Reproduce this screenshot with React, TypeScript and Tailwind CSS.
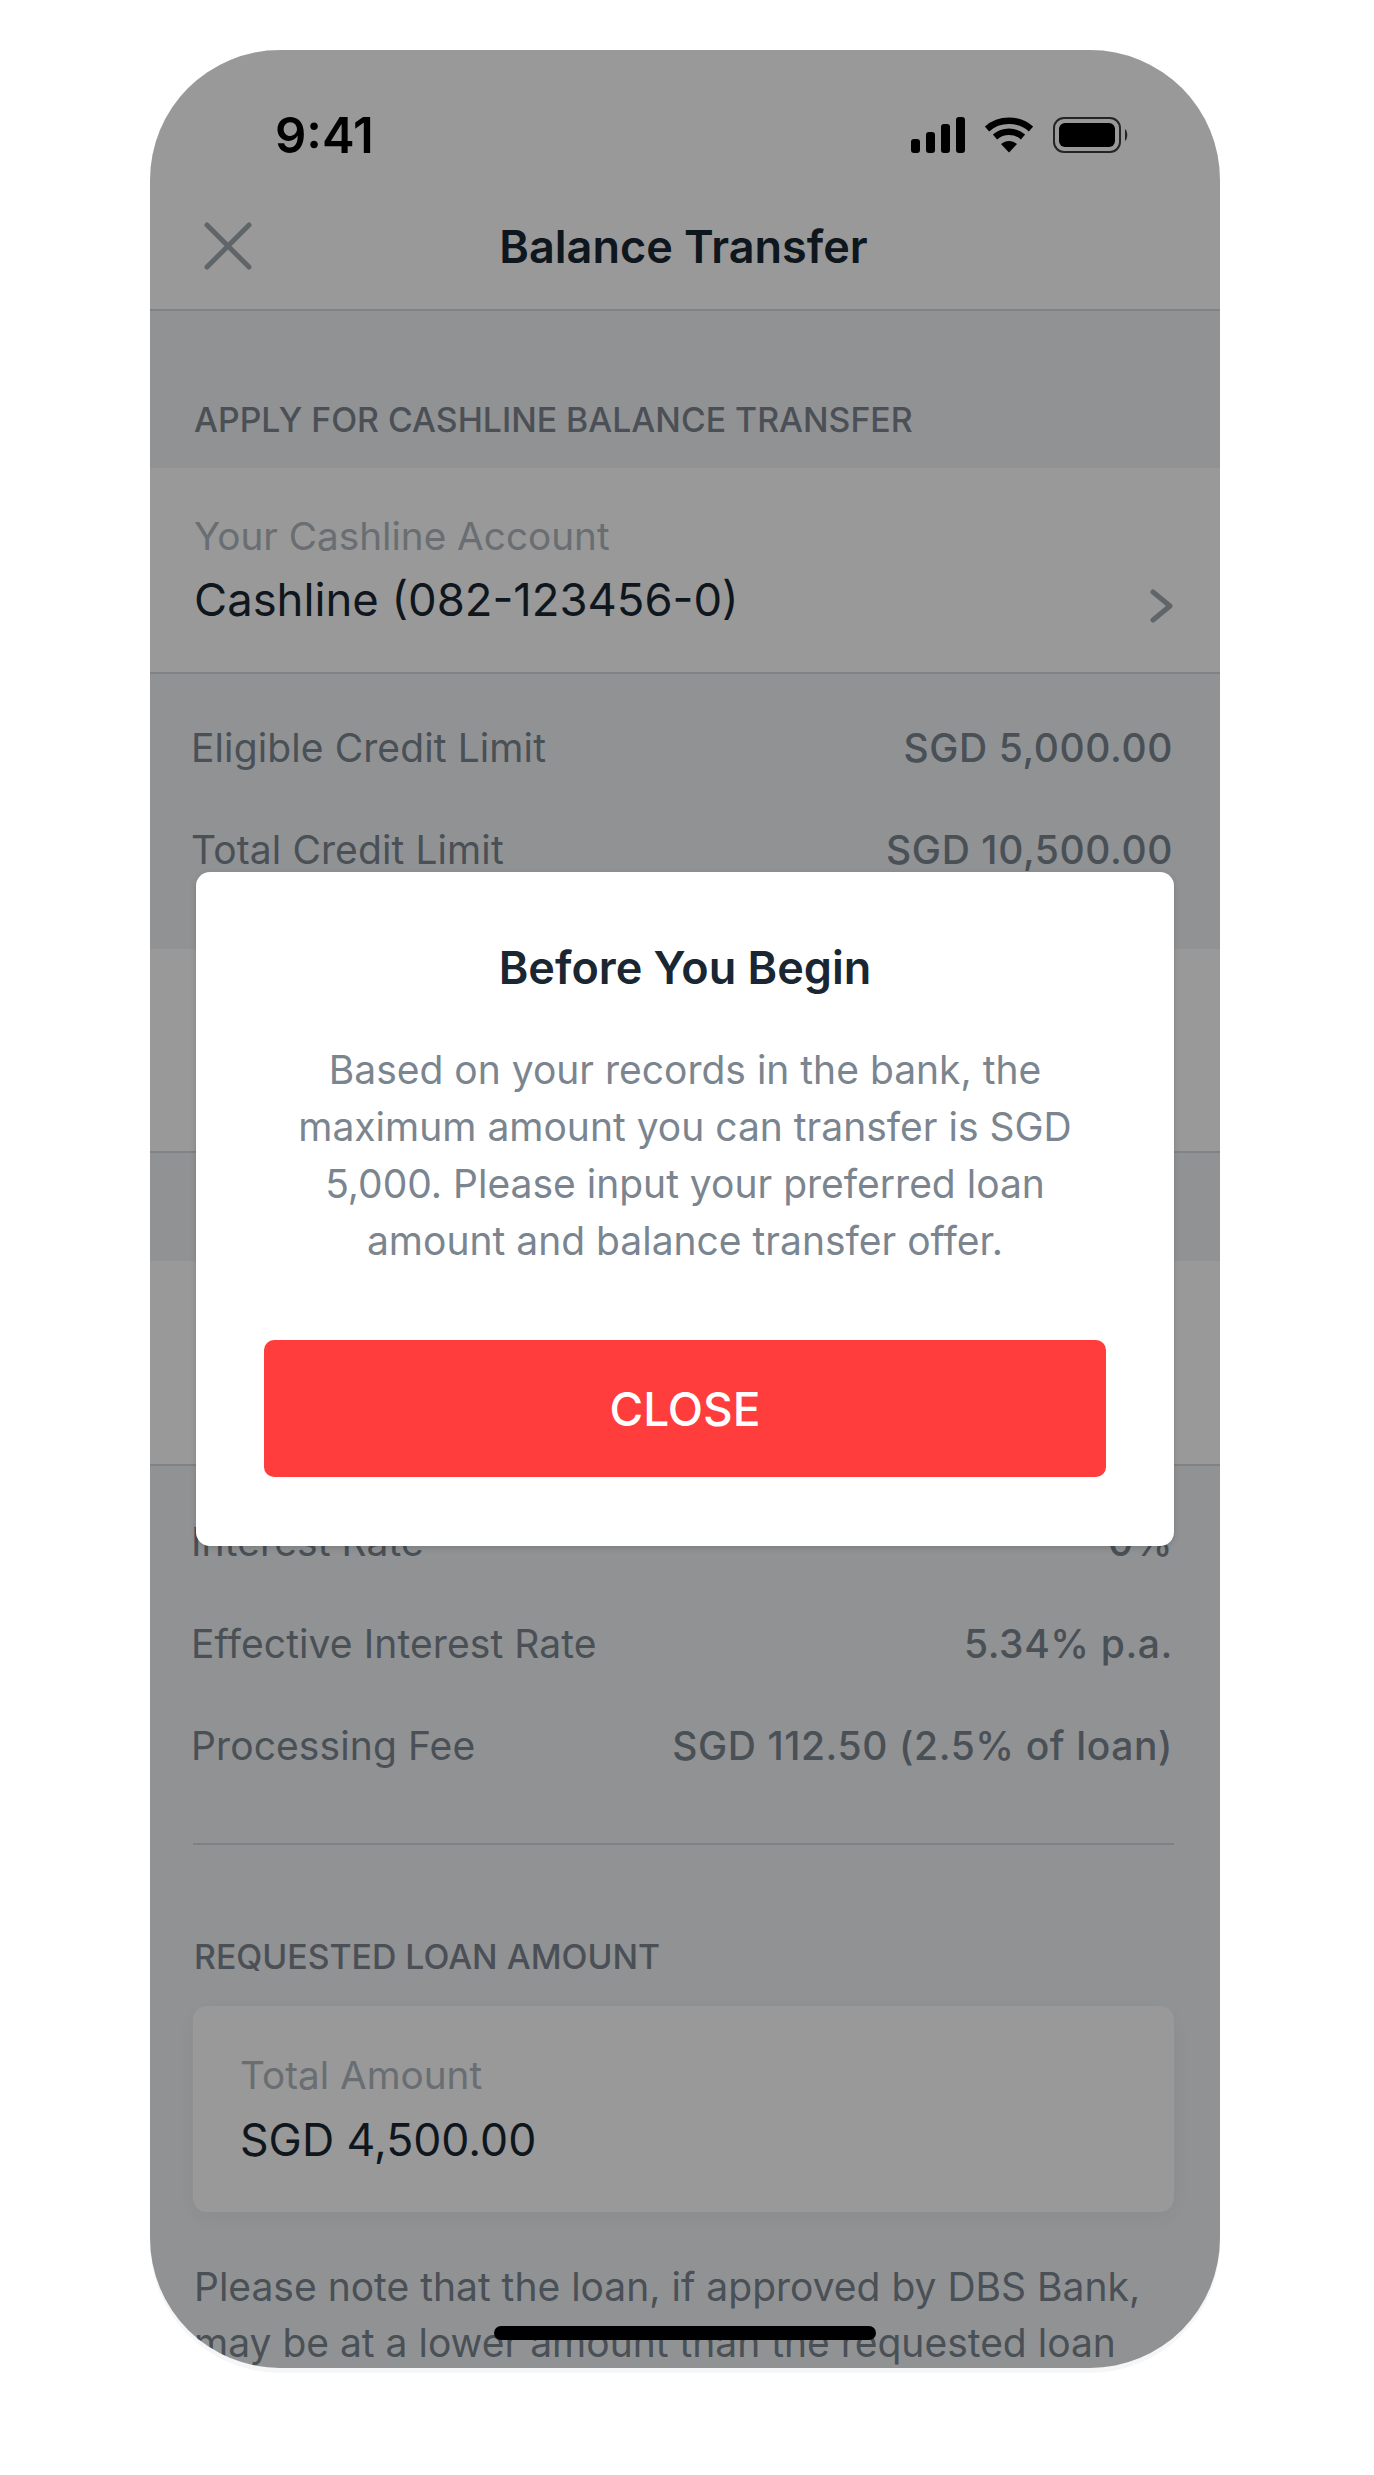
import React from "react";

const FONT = "font-['Inter','Liberation_Sans',sans-serif]";

function SummaryRow({ label, value }: { label: string; value: string }) {
  return (
    <div className="flex h-[102px] items-center justify-between pl-[41px] pr-[47px] text-[39px] text-[#7b858f]">
      <span className="tracking-[0.1px]">{label}</span>
      <span className="font-medium tracking-[0.6px]">{value}</span>
    </div>
  );
}

function SectionLabel({ children }: { children: React.ReactNode }) {
  return <div className="text-[33.8px] font-medium leading-[48px] text-[#7d858f]">{children}</div>;
}

function StatusIcons() {
  return (
    <div className="flex items-center">
      <svg width="54" height="36" viewBox="0 0 54 36" fill="#000">
        <rect x="0" y="22" width="9" height="14" rx="3" />
        <rect x="15" y="15" width="9" height="21" rx="3" />
        <rect x="30" y="7" width="9" height="29" rx="3" />
        <rect x="45" y="0" width="9" height="36" rx="3" />
      </svg>
      <svg className="ml-[20px]" width="48" height="36" viewBox="0 0 48 36" fill="none">
        <path d="M2 12 C14 1 34 1 46 12" stroke="#000" strokeWidth="6.5" />
        <path d="M10 20 C18 13 30 13 38 20" stroke="#000" strokeWidth="6.5" />
        <path d="M16 27 L24 35.5 L32 27 C27 23 21 23 16 27 Z" fill="#000" />
      </svg>
      <svg className="ml-[20px]" width="76" height="36" viewBox="0 0 76 36" fill="none">
        <rect x="1" y="1" width="66" height="34" rx="10" stroke="#3d3d3d" strokeWidth="2" />
        <rect x="6" y="6" width="56" height="24" rx="6" fill="#000" />
        <path d="M72 12 C75 14 75 22 72 24 Z" fill="#3d3d3d" />
      </svg>
    </div>
  );
}

export default function App() {
  return (
    <div className={`min-h-[2475px] bg-white pt-[50px] pl-[150px] ${FONT}`}>
      <div className="w-[1070px] rounded-[130px] bg-[#f5f6f8] pb-[5px]">
        <div className="relative h-[2318px] overflow-hidden rounded-[130px] bg-[#f2f4f7]">
          {/* status bar */}
          <div className="flex h-[134px] items-center justify-between bg-white pl-[125px] pr-[91px] pt-[36px]">
            <span className="text-[49px] font-semibold leading-none text-black">9:41</span>
            <StatusIcons />
          </div>

          {/* nav */}
          <div className="relative flex h-[127px] items-center justify-center border-b-2 border-[#d6dade] bg-white pr-[3px]">
            <svg className="absolute left-[54px] top-[38px]" width="48" height="48" viewBox="0 0 48 48" fill="none">
              <path d="M3 3 L45 45 M45 3 L3 45" stroke="#a0a9b0" strokeWidth="5" strokeLinecap="round" />
            </svg>
            <h1 className="text-[45px] font-semibold text-[#1a2733]">Balance Transfer</h1>
          </div>

          <div className="h-[157px] pl-[44px] pt-[85px]">
            <SectionLabel>APPLY FOR CASHLINE BALANCE TRANSFER</SectionLabel>
          </div>

          {/* account card */}
          <div className="flex h-[206px] items-end justify-between border-b-2 border-[#d6dade] bg-white pb-[40px] pl-[44px] pr-[46px]">
            <div>
              <div className="text-[38.7px] leading-[64px] text-[#b0b7bf]">Your Cashline Account</div>
              <div className="text-[45.4px] leading-[64px] text-[#1a2733]">Cashline (082-123456-0)</div>
            </div>
            <svg className="mb-[9px]" width="24" height="34" viewBox="0 0 24 34" fill="none">
              <path d="M3 3 L20 17 L3 31" stroke="#a0a9b0" strokeWidth="5" strokeLinecap="round" strokeLinejoin="round" />
            </svg>
          </div>

          <div className="flex flex-col pt-[23px]">
            <SummaryRow label="Eligible Credit Limit" value="SGD 5,000.00" />
            <SummaryRow label="Total Credit Limit" value="SGD 10,500.00" />
          </div>

          {/* rows hidden behind the dialog */}
          <div className="mt-[48px] h-[204px] border-b-2 border-[#d6dade] bg-white" />
          <div className="h-[108px]" />
          <div className="h-[205px] border-b-2 border-[#d6dade] bg-white" />

          <div className="flex flex-col pt-[25px]">
            <SummaryRow label="Interest Rate" value="0%" />
            <SummaryRow label="Effective Interest Rate" value="5.34% p.a." />
            <SummaryRow label="Processing Fee" value="SGD 112.50 (2.5% of loan)" />
          </div>

          <div className="ml-[43px] mr-[46px] mt-[46px] border-b-2 border-[#d3d6da]" />

          <div className="pl-[44px] pt-[88px]">
            <SectionLabel>REQUESTED LOAN AMOUNT</SectionLabel>
          </div>

          <div className="ml-[43px] mr-[46px] mt-[25px] h-[206px] rounded-[14px] bg-white pl-[47px] pt-[41px] shadow-[0_6px_24px_rgba(0,0,0,0.05)]">
            <div className="text-[38.7px] leading-[56px] text-[#b0b7bf]">Total Amount</div>
            <div className="mt-[5px] text-[44.6px] leading-[64px] text-[#1a2733]">SGD 4,500.00</div>
          </div>

          <p className="ml-[44px] mr-[60px] mt-[47px] text-[39px] leading-[56px] text-[#7b858f]">
            Please note that the loan, if approved by DBS Bank, may be at a lower amount than the requested loan
          </p>

          {/* dim layer */}
          <div className="absolute inset-0 bg-black/40" />

          {/* dialog */}
          <div className="absolute left-[46px] top-[822px] flex h-[674px] w-[978px] flex-col items-center rounded-[14px] bg-white px-[68px] pt-[64px] shadow-[0_2px_6px_rgba(0,0,0,0.15)]">
            <h2 className="text-[45px] font-semibold leading-[64px] text-[#1a2733]">Before You Begin</h2>
            <p className="mt-[41px] w-[820px] text-center text-[39px] leading-[57px] text-[#7b858f]">
              Based on your records in the bank, the maximum amount you can transfer is SGD 5,000. Please input your preferred loan amount and balance transfer offer.
            </p>
            <button className="mt-[71px] flex h-[137px] w-[842px] items-center justify-center rounded-[10px] bg-[#ff3d3d] pt-[2px] text-[46px] font-medium text-white">
              CLOSE
            </button>
          </div>

          {/* home indicator */}
          <div className="absolute left-[344px] top-[2276px] h-[14px] w-[382px] rounded-full bg-black" />
        </div>
      </div>
    </div>
  );
}
